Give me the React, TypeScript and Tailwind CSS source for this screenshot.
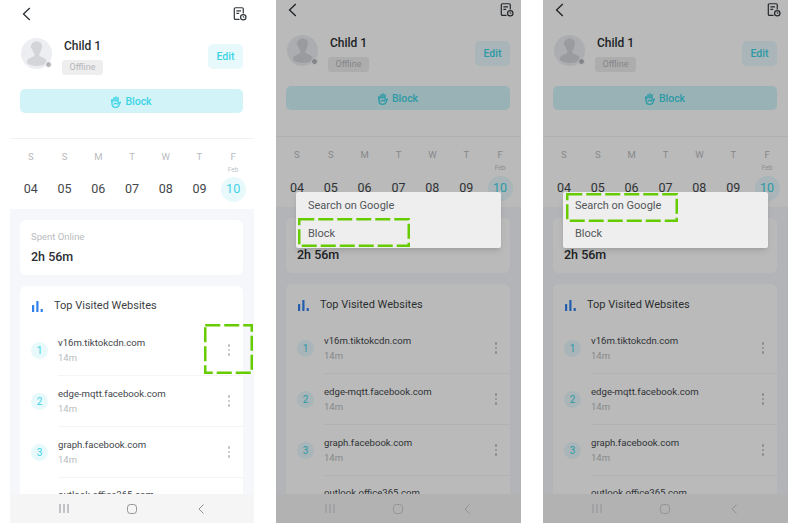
const days = [
  ["S", "04"],
  ["S", "05"],
  ["M", "06"],
  ["T", "07"],
  ["W", "08"],
  ["T", "09"],
  ["F", "10"],
];

const sites = [
  ["1", "v16m.tiktokcdn.com"],
  ["2", "edge-mqtt.facebook.com"],
  ["3", "graph.facebook.com"],
];

function Back() {
  return (
    <svg width="9" height="14" viewBox="0 0 9 14" fill="none" stroke="#2b2f33" strokeWidth="1.3">
      <path d="M7.800 1 1.500 7l6.300 6" />
    </svg>
  );
}

function Report() {
  return (
    <svg width="14" height="14" viewBox="0 0 15 15" fill="none" stroke="#33383c" strokeWidth="1.300">
      <path d="M7 13.200H2.600a1.200 1.200 0 0 1-1.200-1.200V2a1.200 1.200 0 0 1 1.200-1.200h7.200A1.200 1.200 0 0 1 11 2v5" />
      <path d="M3.600 4.200h5M3.600 6.800h3" />
      <circle cx="11" cy="11" r="2.900" />
      <path d="M11 9.600V11h1.200" strokeWidth="0.900" />
    </svg>
  );
}

function HandIcon() {
  return (
    <svg width="10" height="12" viewBox="0 0 10 12" fill="none" stroke="currentColor" strokeWidth="1.200" strokeLinecap="round" strokeLinejoin="round">
      <path d="M1 4.200V8c0 2 1.600 3.400 3.800 3.400 1.900 0 3-1.200 3.500-2.800L9.400 6.200" />
      <path d="M1 6V3.800M3 5V1.800M5 5V1M7 5V1.800" strokeWidth="1.500" />
      <path d="M7 5v2.200l2.400-1" />
      <path d="M2.800 8.200C3.800 7.300 5.400 7.300 6.600 8.200" />
    </svg>
  );
}

function Avatar() {
  return (
    <div className="relative w-[31px] h-[31px] shrink-0 rounded-full bg-[#eceef1]">
      <svg className="absolute inset-0 rounded-full" width="31" height="31" viewBox="0 0 31 31" fill="#d3d5d9">
        <path d="M10 11c-.6-3 .6-6.400 4-7.200 1.400-.9 3-.3 3.600.1 2.600.1 3.500 2.500 3.300 4.500-.1 2-.6 3-1 4.300-.2 1.200-.9 2.300-1.600 3.100-.2 1-.1 1.800.7 2.400 2.100 1.100 5 1.900 6.200 3.600.5.800.7 2 .7 3.200-2.600 2-6.500 2.900-10.400 2.900-3.600 0-6.900-1-9.600-2.900 0-1.200.3-2.600 1-3.400 1.500-1.600 4.200-2.300 6-3.400.6-.6.8-1.400.6-2.300-.9-1-1.600-2.300-1.800-3.700-.5-.5-1.200-1.800-1.700-2.700Z" />
      </svg>
      <span className="absolute right-0 bottom-[1px] w-[7px] h-[7px] rounded-full bg-[#b4b6ba] border border-white" />
    </div>
  );
}

function Bars() {
  return (
    <svg width="11" height="11" viewBox="0 0 11 11" fill="#2f80ed">
      <rect x="0" y="4" width="2.200" height="7" rx="0.500" />
      <rect x="4.300" y="0" width="2.200" height="11" rx="0.500" />
      <rect x="8.600" y="8" width="2.200" height="3" rx="0.500" />
    </svg>
  );
}

function Dots() {
  return (
    <div className="flex flex-col gap-[2px] items-center">
      <span className="w-[2.500px] h-[2.500px] rounded-full bg-[#bfc1c5]" />
      <span className="w-[2.500px] h-[2.500px] rounded-full bg-[#bfc1c5]" />
      <span className="w-[2.500px] h-[2.500px] rounded-full bg-[#bfc1c5]" />
    </div>
  );
}

function Dashed({ className, w, h }: { className: string; w: number; h: number }) {
  return (
    <svg className={"absolute z-30 " + className} width={w} height={h} viewBox={`0 0 ${w} ${h}`} fill="none">
      <rect x="1.250" y="1.250" width={w - 2.500} height={h - 2.500} stroke="#66cc00" strokeWidth="2.500" strokeDasharray="15 4" />
    </svg>
  );
}

function Screen({ dim, mark, wide }: { dim?: boolean; mark: "dots" | "block" | "search"; wide?: boolean }) {
  return (
    <div className={"relative h-[523px] shrink-0 overflow-hidden bg-white flex flex-col " + (wide ? "w-[245px]" : "w-[244px]")}>
      <div className={"flex-1 min-h-0 flex flex-col overflow-hidden " + (dim ? "pt-[3px]" : "pt-[7px]")}>
        <div className="flex items-center justify-between h-[14px] pl-[12px] pr-[7px]">
          <Back />
          <Report />
        </div>
        <div className={"flex items-start px-[11px] " + (dim ? "mt-[18px]" : "mt-[17px]")}>
          <Avatar />
          <div className="ml-[10px] flex-1 flex flex-col items-start">
            <div className="pl-[2px] text-[12px] leading-[16px] font-medium text-[#2b2f33]">Child 1</div>
            <div className="mt-[6px] w-[41px] h-[15px] pt-[1px] rounded-[3px] bg-[#eeeeef] flex items-center justify-center text-[9px] text-[#b5b7ba]">
              Offline
            </div>
          </div>
          <div className="mt-[6px] w-[35px] h-[25px] pt-[1px] rounded-[5px] bg-[#e8f9fc] flex items-center justify-center text-[10.500px] font-medium text-[#3dd3e5]">
            Edit
          </div>
        </div>
        <div className="mt-[14px] ml-[10px] mr-[11px] h-[24px] pt-[1px] rounded-[5px] bg-[#d2f4f8] flex items-center justify-center gap-[4px] text-[10.500px] font-medium text-[#3dd3e5]">
          <HandIcon />
          Block
        </div>
        <div className={"border-b border-[#f0f1f3] " + (dim ? "h-[27px]" : "h-[26px]")} />
        <div className="grid grid-cols-7 px-[4px] h-[70px]">
          {days.map(([d, n], i) => (
            <div key={i} className="flex flex-col items-center">
              <div className="mt-[11px] text-[9.500px] leading-[14px] text-[#b9bbbe]">{d}</div>
              <div className={"text-[6.500px] leading-[12px] text-[#c1c3c6] " + (dim ? "h-[14px]" : "h-[13px]")}>{i === 6 ? "Feb" : ""}</div>
              <div
                className={
                  "w-[25px] h-[25px] rounded-full flex items-center justify-center text-[12.500px] " +
                  (i === 6 ? "bg-[#e8f9fc] text-[#3dd3e5]" : "text-[#43474b]")
                }
              >
                {n}
              </div>
            </div>
          ))}
        </div>
        <div className="flex-1 min-h-0 bg-[#f5f7fb] overflow-hidden pt-[11px] pl-[10px] pr-[11px]">
          <div className="h-[55px] rounded-[6px] bg-white pl-[11px] pt-[10px]">
            <div className="text-[9.500px] leading-[13px] text-[#b9bbbe]">Spent Online</div>
            <div className="mt-[6px] text-[12.500px] leading-[16px] font-medium text-[#2b2f33]">2h 56m</div>
          </div>
          <div className="mt-[11px] rounded-[6px] bg-white h-[300px]">
            <div className={"flex items-center pl-[12px] " + (dim ? "pt-[14px]" : "pt-[13px]")}>
              <Bars />
              <span className="ml-[11px] text-[11px] leading-[14px] text-[#3b3f43]">Top Visited Websites</span>
            </div>
            <div className={dim ? "mt-[11px]" : "mt-[12px]"}>
              {sites.map(([n, s]) => (
                <div key={n} className="flex items-center h-[51px] pl-[11px]">
                  <div className="w-[17px] h-[17px] shrink-0 rounded-full bg-[#e8f9fc] flex items-center justify-center text-[10px] text-[#3dd3e5]">
                    {n}
                  </div>
                  <div className="ml-[10px] flex-1 self-stretch border-b border-[#f3f4f6] flex items-center justify-between pr-[13px]">
                    <div>
                      <div className="text-[9.600px] leading-[14px] text-[#43474b]">{s}</div>
                      <div className="mt-[1px] text-[9.500px] leading-[14px] text-[#b9bbbe]">14m</div>
                    </div>
                    <Dots />
                  </div>
                </div>
              ))}
              <div className="pl-[38px] pt-[10px] text-[9.600px] leading-[14px] text-[#43474b]">outlook.office365.com</div>
            </div>
          </div>
        </div>
      </div>
      <div
        className={
          "h-[29px] shrink-0 bg-[#f5f5f6] grid grid-cols-3 px-[20px] items-center justify-items-center " +
          (dim ? "text-[#c9cacd]" : "text-[#8e9094]")
        }
      >
        <svg width="10" height="9" viewBox="0 0 10 9" stroke="currentColor" strokeWidth="1">
          <path d="M1 0v9M5 0v9M9 0v9" />
        </svg>
        <svg width="10" height="10" viewBox="0 0 10 10" fill="none" stroke="currentColor" strokeWidth="1">
          <rect x="0.500" y="0.500" width="9" height="9" rx="3" />
        </svg>
        <svg width="6" height="10" viewBox="0 0 6 10" fill="none" stroke="currentColor" strokeWidth="1" className="ml-[1px]">
          <path d="M5.500.5 1 5l4.500 4.500" />
        </svg>
      </div>
      {dim && <div className="absolute inset-0 z-10 bg-black/[0.27]" />}
      {dim && (
        <div className="absolute z-20 left-[20px] top-[192px] w-[205px] h-[56px] pt-[1px] rounded-[2px] bg-[#eeeeee] shadow-md text-[11px] text-[#54575a] pl-[12px] flex flex-col">
          <div className="h-[28px] flex items-center">Search on Google</div>
          <div className="h-[28px] mt-[1px] flex items-center">Block</div>
        </div>
      )}
      {mark === "dots" && <Dashed className="left-[194px] top-[324px]" w={49} h={50} />}
      {mark === "block" && <Dashed className="left-[22px] top-[218px]" w={112} h={29} />}
      {mark === "search" && <Dashed className="left-[23px] top-[193px]" w={112} h={29} />}
    </div>
  );
}

export default function App() {
  return (
    <div className="w-[800px] h-[523px] overflow-hidden bg-white flex pl-[10px] gap-[22px] font-['Roboto',sans-serif]">
      <Screen mark="dots" />
      <Screen dim wide mark="block" />
      <Screen dim wide mark="search" />
    </div>
  );
}
